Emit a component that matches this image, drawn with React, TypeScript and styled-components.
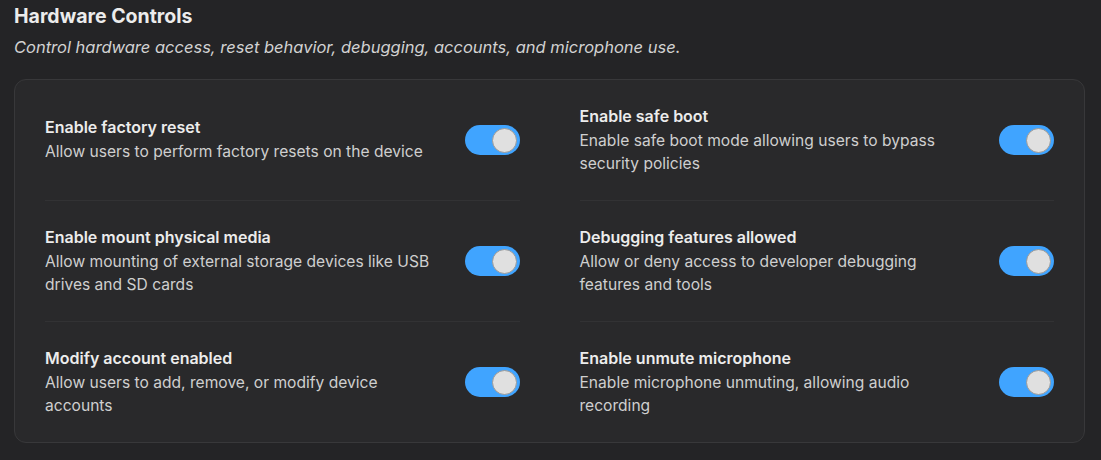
import React from "react";
import styled, { createGlobalStyle } from "styled-components";

const GlobalStyle = createGlobalStyle`
  html, body {
    margin: 0;
    padding: 0;
    background: #242426;
  }
  body {
    font-family: Inter, "Noto Sans", "Liberation Sans", sans-serif;
    color: #e6e6e6;
  }
  * { box-sizing: border-box; }
`;

const Page = styled.div`
  padding: 4px 16px 16px 14px;
  width: 1101px;
  min-height: 460px;
`;

const Heading = styled.h2`
  margin: 0;
  font-size: 19.5px;
  font-weight: 700;
  line-height: 24px;
  color: #ececec;
`;

const Subtitle = styled.p`
  margin: 9px 0 0;
  font-size: 16.5px;
  font-style: italic;
  line-height: 20px;
  color: #d2d2d2;
`;

const Card = styled.div`
  margin-top: 22px;
  width: 1071px;
  background: #29292b;
  border: 1px solid #38383a;
  border-radius: 12px;
  padding: 0 30px;
  display: grid;
  grid-template-columns: 1fr 1fr;
  column-gap: 60px;
`;

const Row = styled.div<{ $last?: boolean }>`
  display: flex;
  align-items: center;
  justify-content: space-between;
  gap: 20px;
  height: ${(p) => (p.$last ? "120px" : "121px")};
  border-bottom: ${(p) => (p.$last ? "none" : "1px solid #323234")};
`;

const TextBlock = styled.div`
  display: flex;
  flex-direction: column;
  gap: 2px;
  width: 392px;
  margin-top: -1px;
`;

const Title = styled.div`
  font-size: 16px;
  font-weight: 600;
  line-height: 22px;
  color: #ececec;
`;

const Desc = styled.div`
  font-size: 15.6px;
  font-weight: 400;
  line-height: 23px;
  color: #cfcfcf;
`;

const Toggle = styled.button<{ $on: boolean }>`
  flex: none;
  position: relative;
  width: 55px;
  height: 30px;
  border: none;
  padding: 0;
  border-radius: 15px;
  background: ${(p) => (p.$on ? "#40a4ff" : "#555")};
  cursor: pointer;
`;

const Knob = styled.span<{ $on: boolean }>`
  position: absolute;
  top: 2.5px;
  left: ${(p) => (p.$on ? "27px" : "3px")};
  width: 25px;
  height: 25px;
  border-radius: 50%;
  background: #e0e0e0;
  border: 1px solid #9a9a9a;
`;

type Item = { title: string; desc: string };

const items: Item[] = [
  { title: "Enable factory reset", desc: "Allow users to perform factory resets on the device" },
  { title: "Enable safe boot", desc: "Enable safe boot mode allowing users to bypass security policies" },
  { title: "Enable mount physical media", desc: "Allow mounting of external storage devices like USB drives and SD cards" },
  { title: "Debugging features allowed", desc: "Allow or deny access to developer debugging features and tools" },
  { title: "Modify account enabled", desc: "Allow users to add, remove, or modify device accounts" },
  { title: "Enable unmute microphone", desc: "Enable microphone unmuting, allowing audio recording" },
];

export default function App() {
  const [state, setState] = React.useState<boolean[]>(items.map(() => true));
  return (
    <>
      <GlobalStyle />
      <Page>
        <Heading>Hardware Controls</Heading>
        <Subtitle>Control hardware access, reset behavior, debugging, accounts, and microphone use.</Subtitle>
        <Card>
          {items.map((it, i) => (
            <Row key={it.title} $last={i >= items.length - 2}>
              <TextBlock>
                <Title>{it.title}</Title>
                <Desc>{it.desc}</Desc>
              </TextBlock>
              <Toggle
                $on={state[i]}
                aria-pressed={state[i]}
                onClick={() => setState((s) => s.map((v, j) => (j === i ? !v : v)))}
              >
                <Knob $on={state[i]} />
              </Toggle>
            </Row>
          ))}
        </Card>
      </Page>
    </>
  );
}
